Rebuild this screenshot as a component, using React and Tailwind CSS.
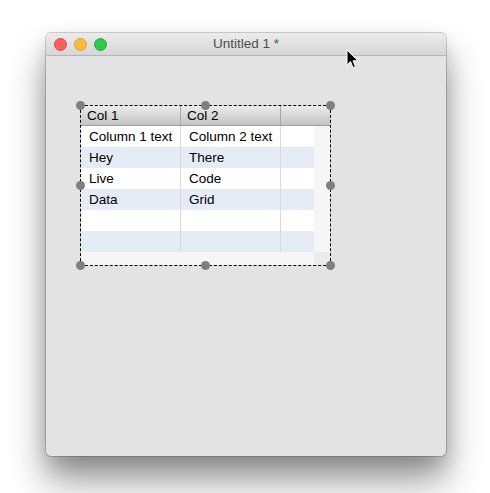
import React from 'react';

const rows = [
  ['Column 1 text', 'Column 2 text'],
  ['Hey', 'There'],
  ['Live', 'Code'],
  ['Data', 'Grid'],
  ['', ''],
  ['', ''],
];

function Handle({ className }) {
  return <div className={`absolute w-[9px] h-[9px] rounded-full bg-[#7f7f7f] ${className}`} />;
}

function Cursor() {
  return (
    <svg className="absolute left-[346px] top-[49px]" width="14" height="21" viewBox="0 0 14 21">
      <path d="M1 1 L1 16 L4.5 12.5 L7 18.5 L9.5 17.5 L7 11.8 L12 11.8 Z" fill="#000" stroke="#fff" strokeWidth="1" strokeLinejoin="round" />
    </svg>
  );
}

export default function App() {
  return (
    <div className="relative w-[490px] h-[493px] bg-white overflow-hidden pt-[33px] pl-[46px]" style={{ fontFamily: '"Liberation Sans", Arial, sans-serif' }}>
      <div className="w-[400px] h-[423px] rounded-[5px] bg-[#e3e3e3] flex flex-col overflow-hidden shadow-[0_0_0_1px_rgba(0,0,0,0.18),0_24px_36px_rgba(0,0,0,0.42),0_8px_18px_rgba(0,0,0,0.12)]">
        {/* title bar */}
        <div className="relative h-[23px] shrink-0 flex items-center justify-center bg-gradient-to-b from-[#ececec] to-[#d6d6d6] border-b border-[#b5b5b5]">
          <div className="absolute left-[8px] top-[5px] flex gap-[7px]">
            <div className="w-[13px] h-[13px] rounded-full bg-[#fc605c] border border-[#df4744]" />
            <div className="w-[13px] h-[13px] rounded-full bg-[#fdbc40] border border-[#de9f34]" />
            <div className="w-[13px] h-[13px] rounded-full bg-[#34c84a] border border-[#27aa35]" />
          </div>
          <span className="text-[13.5px] text-[#4d4d4d] pt-[1px]">Untitled 1 *</span>
        </div>
        {/* body */}
        <div className="flex-1 pl-[34px] pt-[49px]">
          <div className="relative w-[251px] h-[161px] border border-dashed border-black">
            <div className="flex flex-col h-full">
              {/* header */}
              <div className="flex h-[20px] shrink-0 bg-gradient-to-b from-[#ececec] to-[#c4c4c4] border-b border-[#9e9e9e] text-[13.5px] text-black">
                <div className="w-[100px] pl-[6px] leading-[19px] border-r border-[#a8a8a8]">Col 1</div>
                <div className="w-[100px] pl-[6px] leading-[19px] border-r border-[#a8a8a8]">Col 2</div>
                <div className="flex-1" />
              </div>
              <div className="flex flex-1">
                <div className="flex flex-col w-[233px]">
                  {rows.map((r, i) => (
                    <div key={i} className={`flex h-[21px] text-[13.5px] text-black ${i % 2 ? 'bg-[#e6ecf6]' : 'bg-white'}`}>
                      <div className="w-[100px] pl-[8px] leading-[21px] border-r border-[#d9d9d9]">{r[0]}</div>
                      <div className="w-[100px] pl-[8px] leading-[21px] border-r border-[#d9d9d9]">{r[1]}</div>
                      <div className="flex-1" />
                    </div>
                  ))}
                  <div className="flex-1 bg-[#f6f6f6]" />
                </div>
                <div className="flex-1 flex flex-col bg-[#f6f6f6]">
                  <div className="flex-1" />
                  <div className="h-[13px] bg-[#ebebeb]" />
                </div>
              </div>
            </div>
            <Handle className="-left-[5px] -top-[5px]" />
            <Handle className="left-[120px] -top-[5px]" />
            <Handle className="-right-[5px] -top-[5px]" />
            <Handle className="-left-[5px] top-[75px]" />
            <Handle className="-right-[5px] top-[75px]" />
            <Handle className="-left-[5px] -bottom-[5px]" />
            <Handle className="left-[120px] -bottom-[5px]" />
            <Handle className="-right-[5px] -bottom-[5px]" />
          </div>
        </div>
      </div>
      <Cursor />
    </div>
  );
}
